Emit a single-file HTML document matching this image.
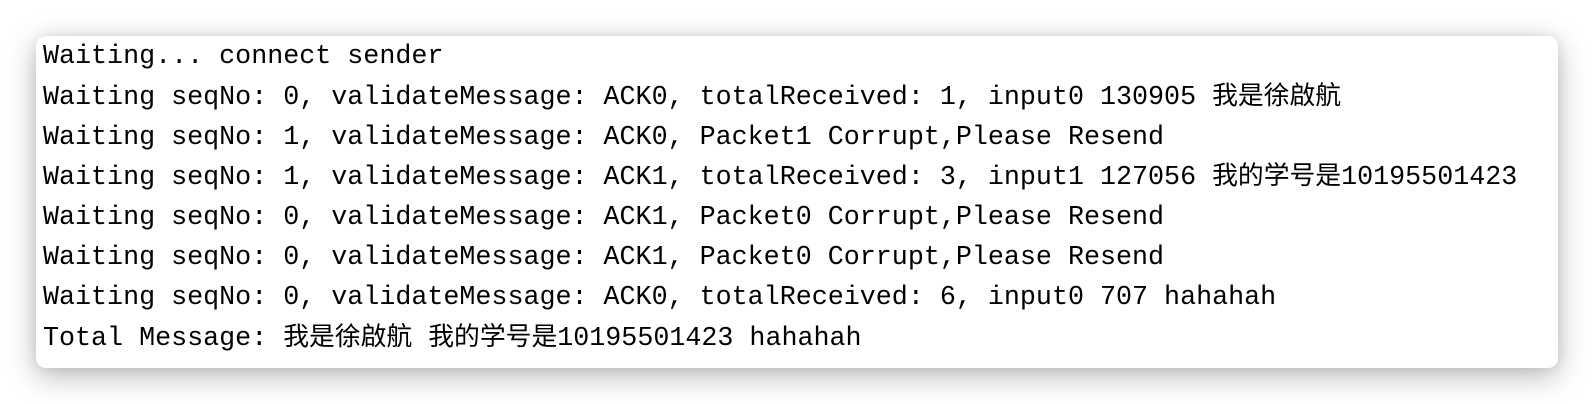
<!DOCTYPE html>
<html><head><meta charset="utf-8"><style>
html,body{margin:0;padding:0;background:#fff;width:1594px;height:404px;overflow:hidden}
.card{position:absolute;left:36px;top:36px;width:1522px;height:332px;background:#fff;border-radius:10px;
box-shadow:0 8px 30px rgba(0,0,0,0.28),0 0 12px rgba(0,0,0,0.08);}
pre{margin:0;padding:2px 0 0 7px;font-family:"Liberation Mono","Noto Sans CJK SC",monospace;font-size:26.7px;line-height:39.8px;color:#000;}
.c{font-size:25.8px}
</style></head><body>
<div class="card"><pre>Waiting... connect sender
Waiting seqNo: 0, validateMessage: ACK0, totalReceived: 1, input0 130905 <span class="c">我是徐啟航</span>
Waiting seqNo: 1, validateMessage: ACK0, Packet1 Corrupt,Please Resend
Waiting seqNo: 1, validateMessage: ACK1, totalReceived: 3, input1 127056 <span class="c">我的学号是</span>10195501423
Waiting seqNo: 0, validateMessage: ACK1, Packet0 Corrupt,Please Resend
Waiting seqNo: 0, validateMessage: ACK1, Packet0 Corrupt,Please Resend
Waiting seqNo: 0, validateMessage: ACK0, totalReceived: 6, input0 707 hahahah
Total Message: <span class="c">我是徐啟航</span> <span class="c">我的学号是</span>10195501423 hahahah</pre></div>
</body></html>
